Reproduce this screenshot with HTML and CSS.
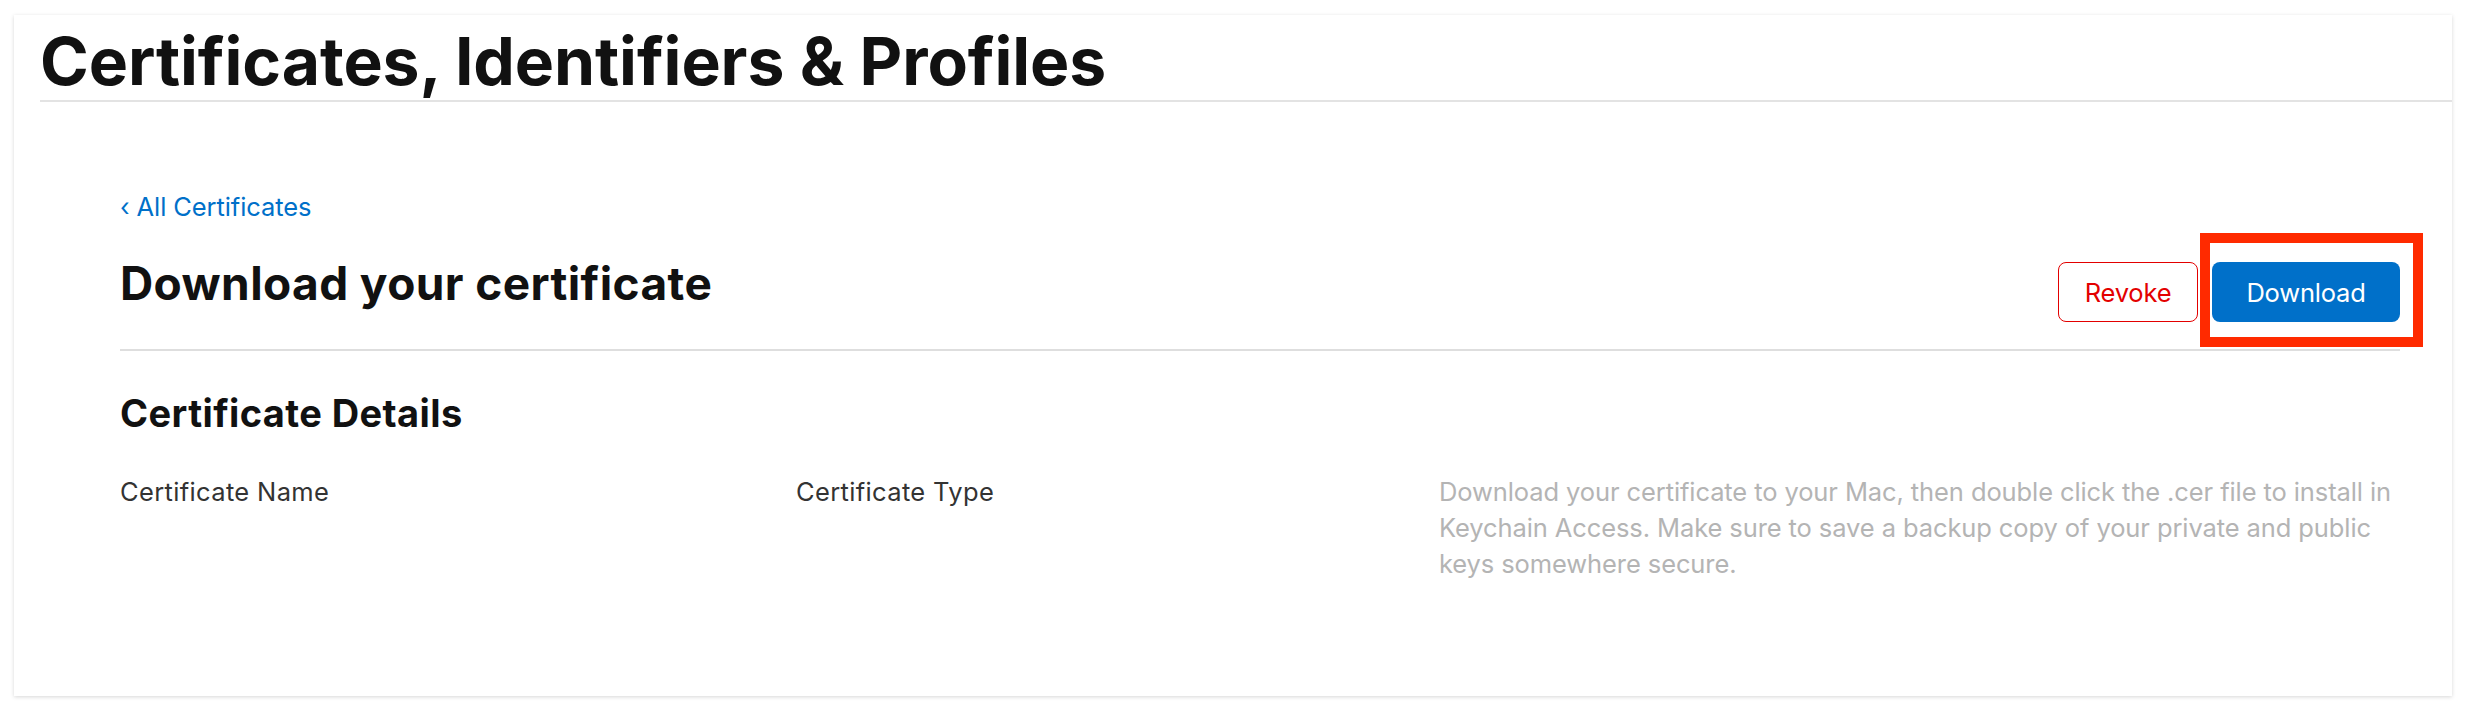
FILE: index.html
```html
<!DOCTYPE html>
<html lang="en">
<head>
<meta charset="utf-8">
<title>Certificates, Identifiers &amp; Profiles</title>
<link rel="stylesheet" href="styles.css">
</head>
<body>
<main class="card">
  <header class="page-header">
    <h1 class="page-title">Certificates, Identifiers &amp; Profiles</h1>
  </header>
  <section class="content">
    <a class="back-link" href="#"><span class="chev">‹</span> All Certificates</a>
    <div class="title-row">
      <h2 class="section-title">Download your certificate</h2>
      <div class="actions">
        <button class="btn btn-revoke">Revoke</button>
        <span class="highlight"><button class="btn btn-download">Download</button></span>
      </div>
    </div>
    <h3 class="details-title">Certificate Details</h3>
    <div class="details-grid">
      <div class="label">Certificate Name</div>
      <div class="label">Certificate Type</div>
      <p class="note">Download your certificate to your Mac, then double click the .cer file to install in Keychain Access. Make sure to save a backup copy of your private and public keys somewhere secure.</p>
    </div>
  </section>
</main>
</body>
</html>
```

FILE: styles.css
```css
html, body {
  margin: 0;
  padding: 0;
  background: #ffffff;
}
body {
  font-family: Inter, "Noto Sans", "Liberation Sans", sans-serif;
  color: #1d1d1f;
  padding: 15px 16px 16px 14px;
}
.card {
  display: block;
  width: 2438px;
  height: 681px;
  box-sizing: border-box;
  background: #fff;
  box-shadow: 0 1px 4px rgba(0, 0, 0, 0.16);
}
.page-header {
  margin-left: 26px;
  padding-top: 13px;
  padding-bottom: 6px;
  border-bottom: 2px solid #e3e3e3;
}
.page-title {
  margin: 0;
  font-size: 66px;
  line-height: 66px;
  font-weight: 700;
  letter-spacing: -0.1px;
  color: #111;
}
.content {
  padding: 0 52px 0 106px;
}
.back-link {
  display: block;
  margin-top: 90px;
  font-size: 25.5px;
  line-height: 30px;
  color: #0070c9;
  text-decoration: none;
  letter-spacing: -0.1px;
}
.chev {
  font-size: 25px;
}
.title-row {
  display: flex;
  justify-content: space-between;
  align-items: flex-start;
  margin-top: 33px;
  padding-bottom: 27px;
  border-bottom: 2px solid #dedede;
}
.section-title {
  margin: 0;
  font-size: 46px;
  line-height: 56px;
  font-weight: 700;
  letter-spacing: 0.4px;
  color: #111;
}
.actions {
  display: flex;
  align-items: center;
  margin-top: 7px;
}
.btn {
  font-family: inherit;
  font-size: 25.5px;
  height: 60px;
  border-radius: 8px;
  box-sizing: border-box;
  cursor: pointer;
  letter-spacing: -0.2px;
}
.btn-revoke {
  width: 140px;
  background: #fff;
  color: #e30000;
  border: 1.5px solid #e30000;
  margin-right: 4px;
}
.highlight {
  display: inline-flex;
  position: relative;
  margin-left: 10px;
}
.highlight::before {
  content: "";
  position: absolute;
  left: -12px;
  top: -29px;
  right: -23px;
  bottom: -25px;
  border: 10px solid #ff2a00;
  pointer-events: none;
}
.btn-download {
  width: 188px;
  background: #0070c9;
  color: #fff;
  border: none;
}
.details-title {
  margin: 39px 0 0;
  font-size: 38px;
  line-height: 46px;
  font-weight: 700;
  letter-spacing: 0.4px;
  color: #111;
}
.details-grid {
  display: grid;
  grid-template-columns: 676px 643px 1fr;
  margin-top: 38px;
}
.label {
  font-size: 25.5px;
  line-height: 36px;
  color: #333;
  letter-spacing: 0.35px;
}
.note {
  margin: 0;
  font-size: 25.5px;
  line-height: 36px;
  color: #b4b4b4;
  letter-spacing: -0.1px;
}
```
